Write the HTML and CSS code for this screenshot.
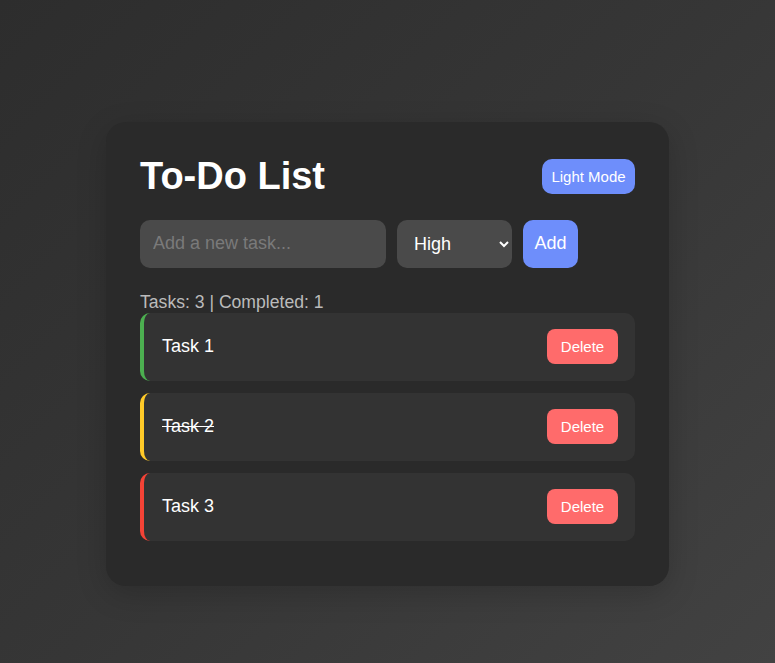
FILE: index.html
```html
<!DOCTYPE html>
<html lang="en">
<head>
<meta charset="utf-8">
<title>To-Do List</title>
<link rel="stylesheet" href="styles.css">
</head>
<body>
<div class="card">
  <div class="header">
    <h1 class="title">To-Do List</h1>
    <button class="btn btn-theme">Light Mode</button>
  </div>
  <div class="input-row">
    <input class="task-input" type="text" placeholder="Add a new task...">
    <select class="priority">
      <option>High</option>
      <option>Medium</option>
      <option>Low</option>
    </select>
    <button class="btn btn-add">Add</button>
  </div>
  <div class="stats">Tasks: 3 | Completed: 1</div>
  <ul class="tasks">
    <li class="task task-low"><span class="task-text">Task 1</span><button class="btn btn-delete">Delete</button></li>
    <li class="task task-medium"><span class="task-text done">Task 2</span><button class="btn btn-delete">Delete</button></li>
    <li class="task task-high"><span class="task-text">Task 3</span><button class="btn btn-delete">Delete</button></li>
  </ul>
</div>
</body>
</html>
```

FILE: styles.css
```css
* { box-sizing: border-box; }
html, body { height: 100%; }
body {
  margin: 0;
  min-height: 100vh;
  background: linear-gradient(135deg, #2d2d2d 0%, #363636 50%, #424242 100%);
  font-family: "Liberation Sans", Arial, sans-serif;
  display: flex;
  justify-content: center;
  align-items: flex-start;
  padding-top: 122px;
}
.card {
  width: 563px;
  background: #2a2a2a;
  border-radius: 20px;
  padding: 33px 34px 33px 34px;
  box-shadow: 0 8px 30px rgba(0, 0, 0, 0.18);
}
.header {
  display: flex;
  justify-content: space-between;
  align-items: center;
}
.title {
  margin: 0;
  font-size: 38px;
  font-weight: bold;
  color: #fff;
  line-height: 1.15;
}
.btn {
  border: none;
  font-family: "Liberation Sans", Arial, sans-serif;
  color: #fff;
  cursor: pointer;
}
.btn-theme {
  background: #6e8efb;
  font-size: 15px;
  line-height: 17px;
  height: 35px;
  padding: 0 9px;
  width: 93px;
  border-radius: 10px;
}
.input-row {
  display: flex;
  gap: 11px;
  margin-top: 21px;
}
.task-input {
  width: 246px;
  height: 48px;
  background: #4a4a4a;
  border: none;
  border-radius: 10px;
  padding: 0 13px;
  font-family: "Liberation Sans", Arial, sans-serif;
  font-size: 18px;
  color: #fff;
  outline: none;
}
.task-input::placeholder { color: #7a7a7a; }
.priority {
  width: 115px;
  height: 48px;
  background-color: #4a4a4a;
  border: none;
  border-radius: 10px;
  padding: 0 8px 0 13px;
  font-family: "Liberation Sans", Arial, sans-serif;
  font-size: 18px;
  color: #fff;
  outline: none;
}
.btn-add {
  width: 55px;
  height: 48px;
  background: #6e8efb;
  border-radius: 10px;
  font-size: 18px;
  padding: 0;
}
.stats {
  margin-top: 24px;
  font-size: 17.6px;
  color: #bbb;
}
.tasks {
  list-style: none;
  margin: 0;
  padding: 0;
}
.task {
  display: flex;
  justify-content: space-between;
  align-items: center;
  background: #333;
  border-radius: 10px;
  border-left: 4px solid #4caf50;
  padding: 16.5px 17px 16.5px 18px;
  margin-bottom: 12px;
}
.task-medium { border-left-color: #ffca28; }
.task-high { border-left-color: #f44336; }
.task-text {
  color: #fff;
  font-size: 18px;
}
.task-text.done { text-decoration: line-through; }
.btn-delete {
  background: #ff6b6b;
  font-size: 15px;
  line-height: 17px;
  height: 35px;
  width: 71px;
  padding: 0;
  border-radius: 8px;
}
```
